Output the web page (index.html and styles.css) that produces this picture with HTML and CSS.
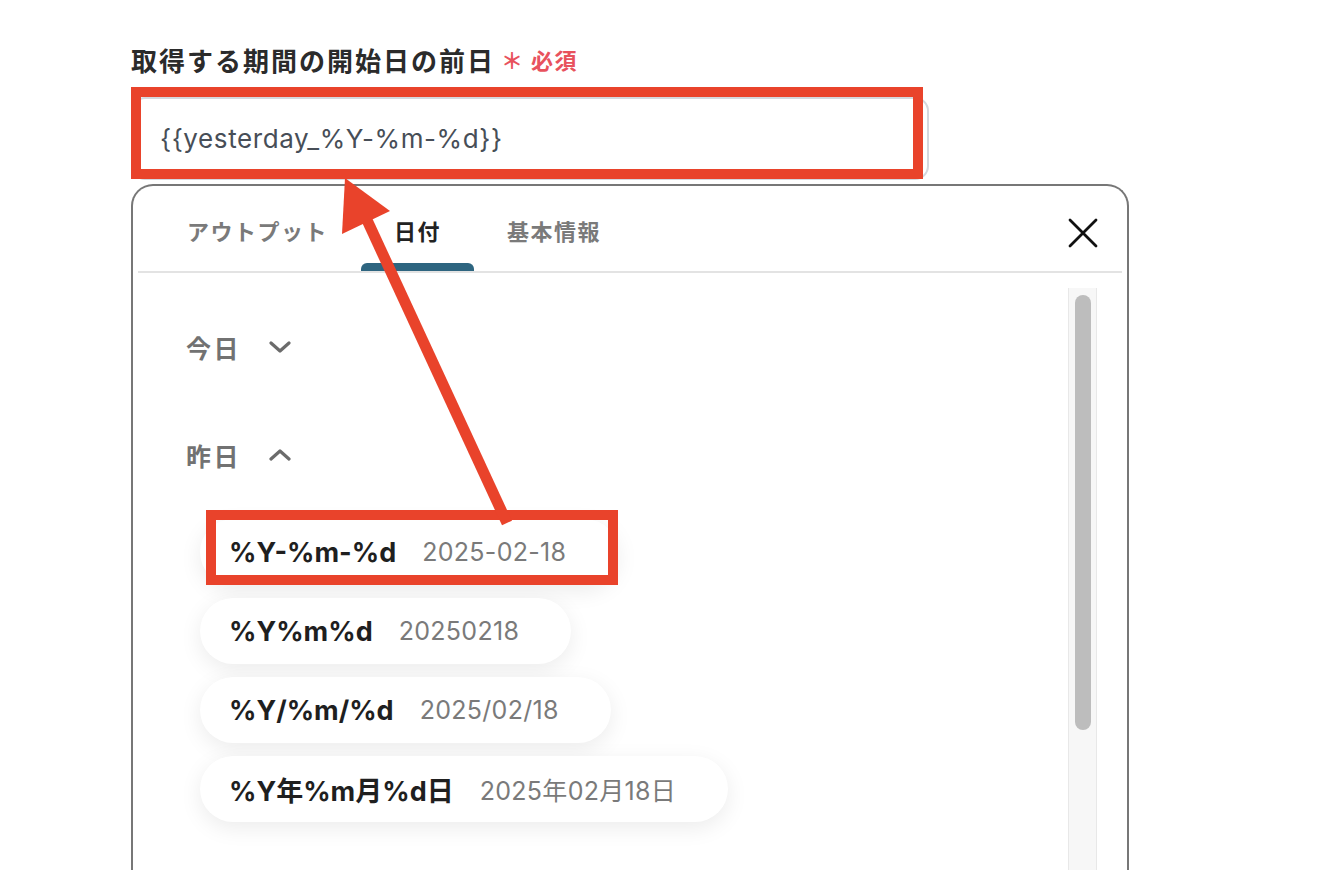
FILE: index.html
```html
<!DOCTYPE html>
<html>
<head>
  <meta charset="utf-8" />
  <title>日付の設定</title>
  <link rel="stylesheet" href="styles.css">
</head>
<body>
  <div class="field">
    <div class="field-label">
      取得する期間の開始日の前日
      <span class="required">＊ 必須</span>
    </div>
    <div class="text-input">{{yesterday_%Y-%m-%d}}</div>

    <div class="picker">
      <div class="picker-head">
        <div class="tabs">
          <div class="tab">アウトプット</div>
          <div class="tab active">日付</div>
          <div class="tab">基本情報</div>
        </div>
        <svg class="close-icon" width="30" height="30" viewBox="0 0 30 30">
          <path d="M2 2 L28 28 M28 2 L2 28" stroke="#111" stroke-width="2.8" stroke-linecap="round" fill="none"/>
        </svg>
      </div>

      <div class="picker-body">
        <div class="groups">
          <div class="group-title">
            今日
            <svg class="chevron" width="22" height="14" viewBox="0 0 22 14">
              <polyline points="2,3 11,11 20,3" stroke="#6b6b6b" stroke-width="3.2" fill="none" stroke-linecap="round" stroke-linejoin="round"/>
            </svg>
          </div>
          <div class="group-title open">
            昨日
            <svg class="chevron" width="22" height="14" viewBox="0 0 22 14">
              <polyline points="2,11 11,3 20,11" stroke="#6b6b6b" stroke-width="3.2" fill="none" stroke-linecap="round" stroke-linejoin="round"/>
            </svg>
          </div>
          <div class="chips">
            <div class="chip"><b>%Y-%m-%d</b><span>2025-02-18</span></div>
            <div class="chip"><b>%Y%m%d</b><span>20250218</span></div>
            <div class="chip"><b>%Y/%m/%d</b><span>2025/02/18</span></div>
            <div class="chip"><b>%Y年%m月%d日</b><span>2025年02月18日</span></div>
          </div>
        </div>
        <div class="scrollbar">
          <div class="scroll-thumb"></div>
        </div>
      </div>
    </div>
  </div>

  <!-- annotation overlays -->
  <div class="mark mark-input"></div>
  <div class="mark mark-chip"></div>
  <svg class="arrow" width="1338" height="870" viewBox="0 0 1338 870">
    <line x1="367" y1="220" x2="507" y2="523" stroke="#e9432b" stroke-width="11"/>
    <polygon points="345,178 342,234 390,211" fill="#e9432b"/>
  </svg>
</body>
</html>
```

FILE: styles.css
```css
* {
  margin: 0;
  padding: 0;
  box-sizing: border-box;
}

body {
  font-family: "Noto Sans CJK JP", "Noto Sans", sans-serif;
  background: #fff;
  color: #222;
  width: 1338px;
  height: 870px;
  overflow: hidden;
  position: relative;
}

.field {
  margin-left: 131px;
  padding-top: 42px;
  width: 998px;
}

.field-label {
  display: flex;
  align-items: center;
  height: 34px;
  font-size: 26px;
  font-weight: 700;
  letter-spacing: 2px;
  color: #2b2b2b;
}

.required {
  margin-left: 6px;
  font-size: 22px;
  letter-spacing: 1.5px;
  color: #e8525d;
}

.text-input {
  margin-top: 21px;
  width: 798px;
  height: 83px;
  padding: 0 0 0 27px;
  display: flex;
  align-items: center;
  border: 2px solid #d4d8de;
  border-radius: 14px;
  font-family: "Inter", "Noto Sans", sans-serif;
  font-size: 26px;
  letter-spacing: 0.6px;
  color: #474e57;
}

.picker {
  margin-top: 4px;
  height: 720px;
  border: 2px solid #777;
  border-bottom: none;
  border-radius: 22px 22px 0 0;
}

.picker-head {
  display: flex;
  align-items: flex-start;
  justify-content: space-between;
  margin: 0 5px;
  height: 87px;
  border-bottom: 2px solid #e3e3e3;
}

.tabs {
  display: flex;
  padding-left: 16px;
}

.tab {
  position: relative;
  height: 85px;
  padding: 28px 33px 0;
  font-size: 22px;
  font-weight: 700;
  letter-spacing: 1.5px;
  color: #7a7a7a;
}

.tab.active {
  color: #222;
}

.tab.active::after {
  content: '';
  position: absolute;
  left: 0;
  right: 0;
  bottom: 0;
  height: 8px;
  background: #2e6580;
  border-radius: 6px 6px 0 0;
}

.close-icon {
  margin: 32px 24px 0 0;
}

.picker-body {
  display: flex;
  align-items: flex-start;
}

.groups {
  flex: 1;
  padding: 58px 0 0 53px;
}

.group-title {
  display: flex;
  align-items: center;
  height: 32px;
  font-size: 25px;
  font-weight: 700;
  letter-spacing: 2.5px;
  color: #727272;
}

.group-title + .group-title {
  margin-top: 76px;
}

.chevron {
  margin-left: 28px;
}

.chips {
  margin: 48px 0 0 14px;
  display: flex;
  flex-direction: column;
  align-items: flex-start;
  gap: 13px;
}

.chip {
  display: flex;
  align-items: center;
  gap: 26px;
  height: 66px;
  padding: 0 52px 0 29px;
  border-radius: 33px;
  background: #fff;
  box-shadow: 0 6px 22px rgba(0, 0, 0, 0.08);
  font-family: "Inter", "Noto Sans CJK JP", sans-serif;
}

.chip b {
  font-size: 27px;
  font-weight: 700;
  color: #1f1f1f;
}

.chip span {
  font-size: 25px;
  letter-spacing: 0.3px;
  color: #7a7a7a;
}

.scrollbar {
  width: 29px;
  height: 600px;
  margin: 15px 30px 0 0;
  background: #f7f7f7;
  border-left: 1px solid #e8e8e8;
  border-right: 1px solid #e8e8e8;
  padding: 7px 5px 0 6px;
}

.scroll-thumb {
  height: 435px;
  border-radius: 8px;
  background: #bdbdbd;
}

/* annotations */
.mark {
  position: absolute;
  border: 10px solid #e9432b;
}

.mark-input {
  left: 131px;
  top: 87px;
  width: 792px;
  height: 92px;
}

.mark-chip {
  left: 206px;
  top: 510px;
  width: 412px;
  height: 75px;
}

.arrow {
  position: absolute;
  left: 0;
  top: 0;
}
```
